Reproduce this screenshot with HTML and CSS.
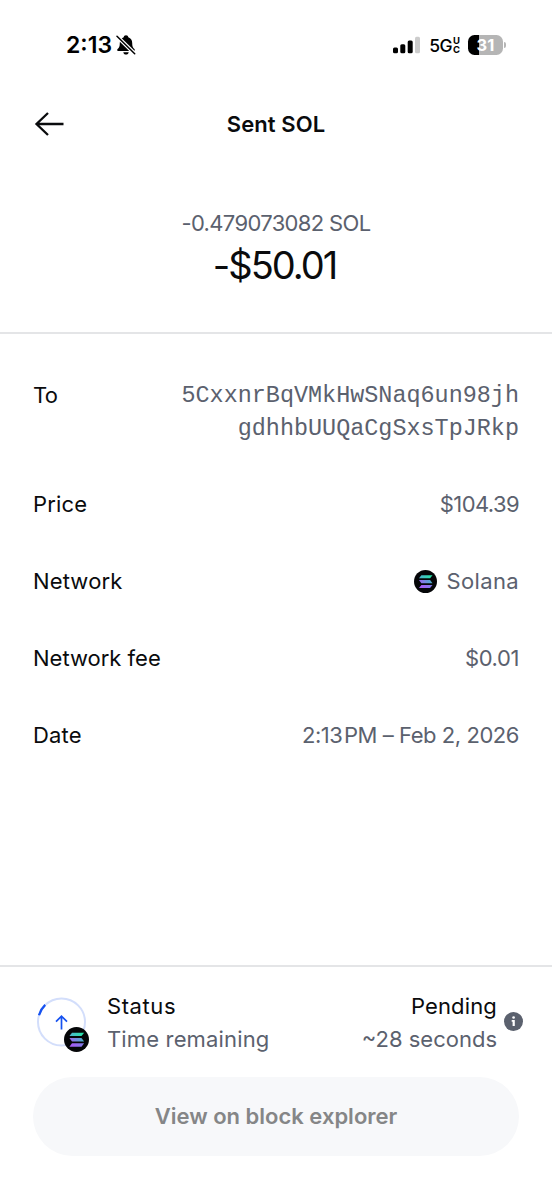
FILE: index.html
```html
<!DOCTYPE html>
<html lang="en">
<head>
<meta charset="utf-8">
<title>Sent SOL</title>
<link rel="stylesheet" href="styles.css">
</head>
<body>
<svg class="defs" width="0" height="0" aria-hidden="true">
  <defs>
    <linearGradient id="sol-top" x1="0" x2="1"><stop offset="0" stop-color="#4fb3cf"/><stop offset="1" stop-color="#24e8a5"/></linearGradient>
    <linearGradient id="sol-mid" x1="0" x2="1"><stop offset="0" stop-color="#9b68f0"/><stop offset="1" stop-color="#49b4ca"/></linearGradient>
    <linearGradient id="sol-low" x1="0" x2="1"><stop offset="0" stop-color="#ad57f8"/><stop offset="1" stop-color="#7e7de6"/></linearGradient>
    <symbol id="solana" viewBox="0 0 24 24">
      <circle cx="12" cy="12" r="12" fill="#050608"/>
      <path d="M7.700 5.400h11.600l-2.500 3.300H5.200z" fill="url(#sol-top)"/>
      <path d="M5.200 10.500h11.600l2.500 3.300H7.700z" fill="url(#sol-mid)"/>
      <path d="M7.700 15.600h11.600l-2.500 3.300H5.200z" fill="url(#sol-low)"/>
    </symbol>
  </defs>
</svg>
<div class="screen">
  <div class="statusbar">
    <div class="clock"><span class="time">2:13</span>
      <svg class="bell" width="20" height="20" viewBox="0 0 20 20">
        <path d="M10 .3c-1.300 0-2.200.9-2.300 2C5 3.200 3.800 5.300 3.800 8c0 3.500-.6 4.600-2.200 6.100-.8.8-.5 1.900.5 1.900h15.800c1 0 1.300-1.100.5-1.900-1.600-1.500-2.200-2.600-2.200-6.100 0-2.700-1.200-4.800-3.900-5.700C12.200 1.200 11.300.3 10 .3zM7.300 17.200h5.400c-.2 1.500-1.300 2.300-2.700 2.300s-2.500-.8-2.700-2.300z"/>
        <path d="M1 1.300l17.700 17.400" stroke="#fff" stroke-width="3.800"/>
        <path d="M1 1.300l17.700 17.400" stroke="#000" stroke-width="1.500" stroke-linecap="round"/>
      </svg>
    </div>
    <div class="indicators">
      <svg class="signal" width="28" height="18" viewBox="0 0 28 18">
        <rect x="0" y="11.500" width="5" height="5.800" rx="1.500"/>
        <rect x="7.300" y="8.200" width="5" height="9.100" rx="1.500"/>
        <rect x="14.700" y="4.500" width="5" height="12.800" rx="1.500"/>
        <rect x="22" y=".8" width="5" height="16.500" rx="1.500" fill="#ccc"/>
      </svg>
      <span class="carrier">5G<span class="uc"><span>U</span><span>C</span></span></span>
      <span class="battery"><span class="level">31</span><i class="nub"></i></span>
    </div>
  </div>

  <div class="nav">
    <svg class="back" width="30" height="24" viewBox="0 0 30 24" fill="none" stroke="#0a0b0d" stroke-width="2.300"><path d="M29.500 12H2.500M14 1L2.500 12 14 23"/></svg>
    <h1>Sent SOL</h1>
  </div>

  <div class="summary">
    <div class="crypto">-0.479073082 SOL</div>
    <div class="fiat">-$50.01</div>
  </div>

  <div class="details">
    <div class="row recipient"><span class="label to-label">To</span><span class="value address">5CxxnrBqVMkHwSNaq6un98jh<br>gdhhbUUQaCgSxsTpJRkp</span></div>
    <div class="row"><span class="label roomy">Price</span><span class="value price">$104.39</span></div>
    <div class="row"><span class="label roomy">Network</span><span class="value network"><svg width="23" height="23"><use href="#solana"/></svg><span>Solana</span></span></div>
    <div class="row"><span class="label">Network fee</span><span class="value fee">$0.01</span></div>
    <div class="row"><span class="label roomy">Date</span><span class="value date">2:13&#8202;PM – Feb 2, 2026</span></div>
  </div>

  <div class="footer">
    <div class="status">
      <div class="progress">
        <svg width="50" height="50" viewBox="0 0 50 50" fill="none">
          <circle cx="24.500" cy="25" r="23.500" stroke="#d3defb" stroke-width="2"/>
          <path d="M2 18.200A23.500 23.500 0 0 1 8.200 7.900" stroke="#1652f0" stroke-width="2.300"/>
          <path d="M24.500 32.500V19M19 24.700L24.500 19.200 30 24.700" stroke="#1652f0" stroke-width="1.700"/>
        </svg>
        <svg class="badge" width="25" height="25"><use href="#solana"/></svg>
      </div>
      <div class="status-text"><div class="status-name">Status</div><div class="remaining muted">Time remaining</div></div>
      <div class="status-value"><div class="pending">Pending</div><div class="seconds muted">~28 seconds</div></div>
      <svg class="info" width="19" height="19" viewBox="0 0 19 19"><circle cx="9.500" cy="9.500" r="9.500" fill="#5b616e"/><path d="M7.700 8h3.100v5.900H8.600V9.700h-.9z" fill="#fff"/><circle cx="9.600" cy="5.500" r="1.350" fill="#fff"/></svg>
    </div>
    <button class="explorer"><span>View on block explorer</span></button>
  </div>
</div>
</body>
</html>
```

FILE: styles.css
```css
* { box-sizing: border-box; }
body { margin: 0; background: #fff; color: #0a0b0d; font: 22px/33px Inter, "Liberation Sans", sans-serif; }
.defs { position: absolute; }
.screen { width: 552px; height: 1200px; display: flex; flex-direction: column; white-space: nowrap; }
.statusbar { height: 90px; padding: 0 46px 0 66px; display: flex; justify-content: space-between; align-items: center; color: #000; }
.clock, .indicators { display: flex; align-items: center; }
.time { font-size: 23px; font-weight: 600; }
.bell { margin-left: 4px; }
.signal { margin-right: 8px; }
.carrier { display: flex; align-items: center; font-size: 17.500px; font-weight: 500; letter-spacing: -.6px; margin-right: 8px; }
.uc { display: flex; flex-direction: column; margin-left: 1px; font-size: 9.500px; line-height: 9px; font-weight: 700; letter-spacing: 0; }
.battery { display: flex; align-items: center; }
.level { width: 35px; height: 20px; border-radius: 6.500px; background: linear-gradient(90deg, #000 11px, #b5b5b5 11px); color: #fff; font-size: 16.500px; line-height: 20px; font-weight: 700; text-align: center; }
.nub { width: 2px; height: 6px; margin-left: 1px; border-radius: 0 2px 2px 0; background: #b5b5b5; }
.nav { height: 68px; display: grid; grid-template-columns: 1fr auto 1fr; align-items: center; padding: 0 34px; }
.nav h1 { grid-column: 2; margin: 0; font-size: 22px; font-weight: 600; letter-spacing: .1px; }
.summary { height: 176px; padding-top: 49px; border-bottom: 2px solid #e4e5e7; text-align: center; }
.crypto { color: #5b616e; line-height: 32px; letter-spacing: -.65px; }
.fiat { padding-right: 3px; font-size: 38px; line-height: 52px; letter-spacing: -2px; }
.details { flex: 1; padding: 45px 33px 0; display: flex; flex-direction: column; gap: 44px; }
.row { display: flex; justify-content: space-between; align-items: flex-start; }
.recipient { margin-bottom: -1px; }
.roomy { letter-spacing: .15px; }
.to-label { letter-spacing: -.8px; }
.value, .muted { color: #5b616e; }
.value { text-align: right; }
.address { font-family: "Liberation Mono", monospace; font-size: 23.450px; }
.price { letter-spacing: -.6px; }
.fee { letter-spacing: -.4px; }
.date { letter-spacing: -.45px; }
.network { display: flex; align-items: center; gap: 10px; letter-spacing: .35px; }
.footer { height: 235px; border-top: 2px solid #e4e5e7; padding: 23px 33px 0; }
.status { display: flex; align-items: center; height: 66px; padding-left: 4px; margin-right: -4px; }
.progress { position: relative; height: 50px; width: 50px; margin: -3px 20px 0 0; }
.progress svg { display: block; }
.progress .badge { position: absolute; left: 27px; top: 30px; }
.status-name { letter-spacing: .6px; }
.remaining { letter-spacing: .15px; }
.status-value { margin-left: auto; margin-right: 7px; text-align: right; }
.pending { letter-spacing: .15px; }
.info { margin-top: -4px; }
.explorer { display: block; width: 486px; height: 79px; margin-top: 21px; border: 0; border-radius: 40px; background: #f7f8fa; color: #858687; font: 600 22px/33px Inter, sans-serif; }
```
